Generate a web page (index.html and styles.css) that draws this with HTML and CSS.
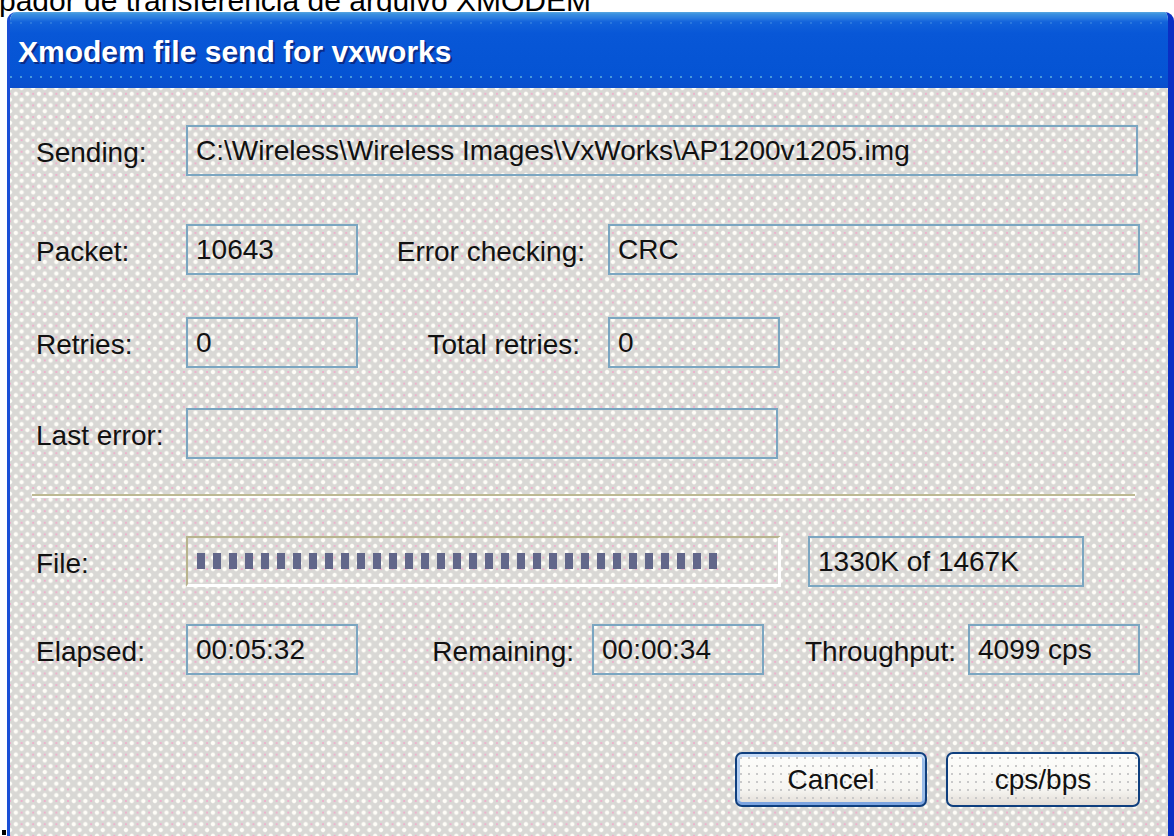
FILE: index.html
```html
<!DOCTYPE html>
<html lang="pt">
<head>
<meta charset="utf-8">
<title>Xmodem file send for vxworks</title>
<link rel="stylesheet" href="styles.css">
</head>
<body>
  <div class="caption">pador de transferência de arquivo XMODEM</div>
  <div class="stage">
    <div class="gutter"><span class="mark"></span></div>
    <div class="window">
      <div class="titlebar"><span class="title">Xmodem file send for vxworks</span></div>
      <div class="client">
        <div class="row r1">
          <span class="label">Sending:</span>
          <div class="field w-path">C:\Wireless\Wireless Images\VxWorks\AP1200v1205.img</div>
        </div>
        <div class="row r2">
          <span class="label">Packet:</span>
          <div class="field w-s">10643</div>
          <span class="label2 l-err">Error checking:</span>
          <div class="field w-err">CRC</div>
        </div>
        <div class="row r3">
          <span class="label">Retries:</span>
          <div class="field w-s">0</div>
          <span class="label2 l-tot">Total retries:</span>
          <div class="field w-s">0</div>
        </div>
        <div class="row r4">
          <span class="label">Last error:</span>
          <div class="field w-last"></div>
        </div>
        <div class="sep"></div>
        <div class="row r5">
          <span class="label">File:</span>
          <div class="progress"><div class="fill"></div></div>
          <div class="field w-size">1330K of 1467K</div>
        </div>
        <div class="row r6">
          <span class="label">Elapsed:</span>
          <div class="field w-s">00:05:32</div>
          <span class="label2 l-rem">Remaining:</span>
          <div class="field w-s">00:00:34</div>
          <span class="label2 l-thr">Throughput:</span>
          <div class="field w-s">4099 cps</div>
        </div>
        <div class="buttons">
          <button class="btn btn-default">Cancel</button>
          <button class="btn btn-alt">cps/bps</button>
        </div>
      </div>
    </div>
  </div>
</body>
</html>
```

FILE: styles.css
```css
* { box-sizing: border-box; }

html, body {
  margin: 0;
  padding: 0;
  background: #ffffff;
}

body {
  width: 1174px;
  height: 836px;
  overflow: hidden;
  font-family: "Liberation Sans", Arial, sans-serif;
  color: #111111;
}

/* caption line above the dialog, clipped at the page top */
.caption {
  height: 23px;
  margin-top: -11px;
  margin-left: -1px;
  line-height: 23px;
  font-size: 30px;
  color: #000000;
  white-space: nowrap;
}

.stage {
  display: flex;
  height: 824px;
}

.gutter {
  width: 7px;
  display: flex;
  align-items: flex-end;
}

.mark {
  width: 4px;
  height: 5px;
  margin: 0 0 1px 2px;
  background: #000000;
}

/* window frame */
.window {
  flex: 1;
  display: flex;
  flex-direction: column;
  border-left: 3px solid #1a4fd6;
  border-right: 6px solid #0a2fc4;
  border-radius: 9px 9px 0 0;
  overflow: hidden;
}

.titlebar {
  height: 76px;
  padding: 5px 0 0 8px;
  line-height: 70px;
  font-size: 30px;
  font-weight: bold;
  letter-spacing: 0px;
  color: #ffffff;
  text-shadow: 2px 2px 0 #0b2c86;
  white-space: nowrap;
  background:
    repeating-linear-gradient(to right, rgba(120, 210, 230, 0.55) 0 2px, transparent 2px 10px) 0 64px / 100% 2px no-repeat,
    repeating-linear-gradient(to right, rgba(90, 160, 230, 0.35) 0 2px, transparent 2px 10px) 0 10px / 100% 2px no-repeat,
    linear-gradient(to bottom, #5aa8e0 0px, #3a90e0 2px, #2a7ce0 6px, #1262da 10px, #0857d7 28%, #0554d4 80%, #0a4ecc 100%);
}

/* dithered dialog face */
.client {
  flex: 1;
  padding: 37px 28px 0 26px;
  background-color: #d9d8d5;
  background-image:
    radial-gradient(circle, #fffef8 0 1.5px, rgba(255, 254, 248, 0) 2.7px),
    radial-gradient(circle, #fffef8 0 1.5px, rgba(255, 254, 248, 0) 2.7px),
    radial-gradient(circle, #eeb0cc 0 0.7px, rgba(238, 176, 204, 0) 1.4px);
  background-size: 11.6px 11.6px;
  background-position: 0 0, 5.8px 5.8px, 5.8px 0;
}

.row {
  display: flex;
  align-items: flex-start;
  height: 51px;
  font-size: 28px;
}

.r2 { margin-top: 48px; }
.r3 { margin-top: 42px; }
.r4 { margin-top: 40px; }
.r5 { margin-top: 38px; }
.r6 { margin-top: 37px; }

.label,
.label2 {
  padding-top: 2px;
  line-height: 51px;
  white-space: nowrap;
}

.label { width: 150px; }

.label2 { text-align: right; }
.l-err { width: 250px; padding-right: 23px; }
.l-tot { width: 250px; padding-right: 28px; }
.l-rem { width: 234px; padding-right: 18px; }
.l-thr { width: 204px; padding-right: 12px; }

/* read-only text boxes */
.field {
  height: 51px;
  padding-left: 8px;
  border: 2px solid #7ba6c1;
  line-height: 47px;
  white-space: nowrap;
  overflow: hidden;
}

.w-path { width: 952px; }
.w-s { width: 172px; }
.w-err { width: 532px; }
.w-last { width: 592px; }
.w-size { width: 276px; margin-left: 27px; }

.sep {
  width: 1103px;
  height: 4px;
  margin: 35px 0 0 -4px;
  border-top: 2px solid #bdb993;
  border-bottom: 2px solid #ffffff;
}

/* sunken progress track with block segments */
.progress {
  display: flex;
  align-items: center;
  width: 595px;
  height: 51px;
  padding-left: 9px;
  border-style: solid;
  border-width: 2px 3px 3px 2px;
  border-color: #b8b48e #ffffff #ffffff #b8b48e;
}

.progress .fill {
  width: 520px;
  height: 16px;
  background: repeating-linear-gradient(to right, #62678a 0 8px, transparent 8px 16px);
}

.buttons {
  display: flex;
  justify-content: flex-end;
  gap: 19px;
  margin-top: 77px;
}

.btn {
  height: 55px;
  padding: 0;
  border: 2px solid #0f3f7e;
  border-radius: 7px;
  font-family: "Liberation Sans", Arial, sans-serif;
  font-size: 28px;
  line-height: 51px;
  color: #111111;
  text-align: center;
  background:
    radial-gradient(circle, #c9c9c9 0 0.8px, rgba(201, 201, 201, 0) 1.4px) 0 0 / 8px 8px,
    linear-gradient(to bottom, #fdfdfb 0%, #f6f5f1 70%, #e2dcd6 100%);
}

.btn-default {
  width: 192px;
  box-shadow:
    inset 0 3px 0 #c6dbf6,
    inset 0 -3px 0 #7ca4e0,
    inset 3px 0 0 #b3cff3,
    inset -3px 0 0 #9abdea;
}

.btn-alt { width: 194px; }
```
